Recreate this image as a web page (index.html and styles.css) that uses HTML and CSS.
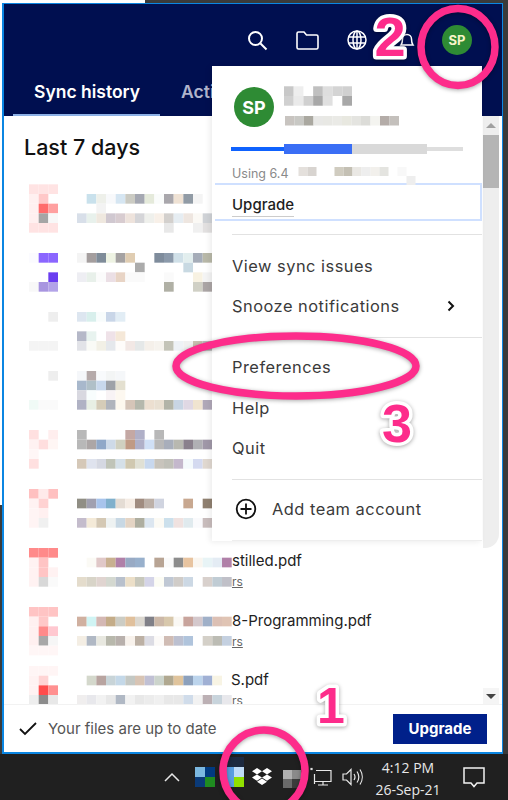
FILE: index.html
```html
<!DOCTYPE html>
<html lang="en">
<head>
    <meta charset="UTF-8">
    <meta name="viewport" content="width=device-width, initial-scale=1.0">
    <title>Dropbox - Preferences</title>
    <link rel="stylesheet" href="styles.css">
</head>
<body>
    <div class="window">
        <header class="top">
            <div class="top-icons">
                <span class="top-btn"><svg width="24" height="24" viewBox="0 0 24 24" fill="none" stroke="#fff" stroke-width="2"><circle cx="10.5" cy="10.5" r="6.5"/><path d="M15.5 15.5l6 6"/></svg></span>
                <span class="top-btn"><svg width="24" height="24" viewBox="0 0 24 24" fill="none" stroke="#fff" stroke-width="1.6"><path d="M2 5.5a1.500 1.500 0 0 1 1.500-1.500h5.500l2.500 3h10a1.500 1.500 0 0 1 1.500 1.500v11a1.500 1.500 0 0 1-1.500 1.500h-18a1.500 1.500 0 0 1-1.500-1.500z"/></svg></span>
                <span class="top-btn"><svg width="22" height="22" viewBox="0 0 22 22" fill="none" stroke="#fff" stroke-width="1.500"><circle cx="11" cy="11" r="9"/><ellipse cx="11" cy="11" rx="4" ry="9"/><path d="M2 8h18M2 14h18M11 2v18"/></svg></span>
                <span class="top-btn"><svg width="22" height="22" viewBox="0 0 22 22" fill="none" stroke="#fff" stroke-width="1.500"><path d="M5 16c1.500-2 1.500-4 1.500-6a4.500 4.500 0 0 1 9 0c0 2 0 4 1.500 6z"/></svg></span>
                <span class="top-btn"><span class="avatar avatar-small">SP</span></span>
            </div>
            <nav class="tabs">
                <span class="tab tab-active">Sync history</span>
                <span class="tab">Activity</span>
            </nav>
        </header>

        <div class="content">
            <main class="panel">
                <h2 class="panel-title">Last 7 days</h2>
                <div class="file-list">
                    <div class="file-row">
                        <svg class="mosaic-icon" viewBox="0 0 3 5"><g transform="translate(0,-1)"><rect x="0" fill="#ffe3e3"/><rect x="1" fill="#ffe3e3"/><rect x="2" fill="#ffe3e3"/></g><rect x="0" fill="#fff0f0"/><rect x="1" fill="#ffc8c8"/><g transform="translate(0,1)"><rect x="0" fill="#fff0f0"/><rect x="1" fill="#ff6b6b"/><rect x="2" fill="#ffa0a0"/></g><g transform="translate(0,2)"><rect x="0" fill="#fff0f0"/><rect x="1" fill="#a5a5a5"/><rect x="2" fill="#f8f8f8"/></g><g transform="translate(0,3)"><rect x="0" fill="#ffe3e3"/><rect x="1" fill="#ffe3e3"/><rect x="2" fill="#ffe3e3"/></g></svg>
                        <svg class="mosaic-text" viewBox="0 0 16 5"><rect x="1" fill="#c9e1ec"/><rect x="2" fill="#eef0ea"/><rect x="3" fill="#f8f9fb"/><rect x="4" fill="#d6e6f2"/><rect x="5" fill="#cbcbc3"/><rect x="6" fill="#a5a8b2"/><rect x="7" fill="#e5eadb"/><rect x="8" fill="#fafcfb"/><rect x="9" fill="#a9a7ac"/><rect x="10" fill="#efe2d4"/><rect x="11" fill="#919ba5"/><rect x="12" fill="#f4f4f4"/><g transform="translate(0,1)"><rect x="2" fill="#f3f3f3"/></g><g transform="translate(0,2)"><rect x="0" fill="#d8dfe9"/><rect x="1" fill="#e8f1ec"/><rect x="2" fill="#efe8df"/><rect x="3" fill="#d0c8d0"/><rect x="4" fill="#d8ccd0"/><rect x="5" fill="#eee3dc"/><rect x="6" fill="#d5d5d8"/><rect x="7" fill="#eff0ec"/><rect x="8" fill="#f8f0e8"/><rect x="9" fill="#d3d0cd"/><rect x="10" fill="#e6edf2"/><rect x="11" fill="#eee6e0"/><rect x="12" fill="#fbf9f5"/><rect x="13" fill="#cfd2d6"/></g><g transform="translate(0,3)"><rect x="9" fill="#e8e8e8"/><rect x="12" fill="#f0f0f0"/><rect x="13" fill="#e2e0e0"/></g></svg>
                    </div>
                    <div class="file-row">
                        <svg class="mosaic-icon" viewBox="0 0 3 5"><rect x="0" fill="#fbfbff"/><rect x="1" fill="#8b66ff"/><rect x="2" fill="#8b66ff"/><g transform="translate(0,2)"><rect x="2" fill="#6a3df0"/></g><g transform="translate(0,3)"><rect x="0" fill="#f8f8f8"/><rect x="1" fill="#a895e0"/><rect x="2" fill="#b3a3e8"/></g></svg>
                        <svg class="mosaic-text" viewBox="0 0 16 5"><rect x="0" fill="#f4f4f4"/><rect x="1" fill="#a49e9e"/><rect x="2" fill="#7f8c99"/><rect x="3" fill="#eef3e3"/><rect x="4" fill="#a5a2a2"/><rect x="5" fill="#e0cdb2"/><rect x="8" fill="#7f8c9c"/><rect x="9" fill="#8c9aab"/><rect x="10" fill="#d0e0e8"/><rect x="11" fill="#e2eeee"/><rect x="12" fill="#a5acb8"/><rect x="13" fill="#b8b8a8"/><g transform="translate(0,1)"><rect x="6" fill="#ababab"/><rect x="11" fill="#c8d9e2"/></g><g transform="translate(0,2)"><rect x="0" fill="#eeeef3"/><rect x="1" fill="#e8f0ea"/><rect x="2" fill="#fbfbfb"/><rect x="3" fill="#ebdfe5"/><rect x="4" fill="#e8d4c5"/><rect x="5" fill="#fafafa"/><rect x="6" fill="#fafafa"/><rect x="9" fill="#fafafa"/><rect x="12" fill="#f8f2e2"/><rect x="13" fill="#f4f4f4"/></g><g transform="translate(0,3)"><rect x="9" fill="#b0b0a5"/><rect x="12" fill="#d0d0c5"/><rect x="13" fill="#aba5a5"/></g></svg>
                    </div>
                    <div class="file-row">
                        <svg class="mosaic-icon" viewBox="0 0 3 5"><rect x="2" fill="#eeeeee"/><g transform="translate(0,3)"><rect x="0" fill="#f4f4f4"/><rect x="1" fill="#f4f4f4"/><rect x="2" fill="#f4f4f4"/></g></svg>
                        <svg class="mosaic-text" viewBox="0 0 16 5"><rect x="0" fill="#dde6f0"/><rect x="1" fill="#d8efec"/><rect x="2" fill="#f8fcfc"/><rect x="3" fill="#c9d6e8"/><rect x="4" fill="#e2edf5"/><g transform="translate(0,2)"><rect x="0" fill="#b5b8c8"/><rect x="1" fill="#e8f3ef"/><rect x="3" fill="#efe2e8"/><rect x="4" fill="#f5e8d8"/></g><g transform="translate(0,3)"><rect x="0" fill="#e2e3e8"/><rect x="1" fill="#f9faf6"/><rect x="2" fill="#f2f0e6"/><rect x="3" fill="#e5e8ec"/><rect x="4" fill="#fefcfa"/><rect x="5" fill="#f2e8e5"/><rect x="6" fill="#e5e8e8"/><rect x="7" fill="#f5f0ea"/><rect x="8" fill="#f6f3ee"/><rect x="9" fill="#c4c4b8"/><rect x="10" fill="#eef2f6"/><rect x="11" fill="#f0f0f0"/><rect x="12" fill="#c8c0b0"/><rect x="13" fill="#c0c0c0"/></g></svg>
                    </div>
                    <div class="file-row">
                        <svg class="mosaic-icon" viewBox="0 0 3 5"><rect x="2" fill="#eeeeee"/><g transform="translate(0,3)"><rect x="0" fill="#f0faf6"/><rect x="1" fill="#fafafa"/><rect x="2" fill="#fafafa"/></g></svg>
                        <svg class="mosaic-text" viewBox="0 0 16 5"><rect x="0" fill="#f5f7fa"/><rect x="1" fill="#b5aaaa"/><rect x="2" fill="#f8fafc"/><rect x="3" fill="#f3f5f5"/><rect x="4" fill="#f5f7f9"/><g transform="translate(0,1)"><rect x="0" fill="#a8b8cc"/><rect x="1" fill="#b0c0c8"/><rect x="2" fill="#c8d8ec"/><rect x="3" fill="#9ea2a8"/><rect x="4" fill="#e4e0d0"/></g><g transform="translate(0,2)"><rect x="0" fill="#d8d8e0"/><rect x="1" fill="#f8fdfd"/><rect x="3" fill="#f8f3f5"/><rect x="4" fill="#fdf8f0"/></g><g transform="translate(0,3)"><rect x="0" fill="#b0b2c4"/><rect x="1" fill="#e8efe4"/><rect x="2" fill="#d5ccb8"/><rect x="3" fill="#b0b4bc"/><rect x="4" fill="#fdf8ee"/><rect x="5" fill="#d5c5b8"/><rect x="6" fill="#b5b8ac"/><rect x="7" fill="#ecdfd0"/><rect x="8" fill="#e9e0d2"/><rect x="9" fill="#b2b4a8"/><rect x="10" fill="#c8d5e4"/><rect x="11" fill="#e0d8e4"/><rect x="12" fill="#f0e4d0"/><rect x="13" fill="#b0a8b8"/></g></svg>
                    </div>
                    <div class="file-row">
                        <svg class="mosaic-icon" viewBox="0 0 3 5"><rect x="0" fill="#ffe0e0"/><rect x="2" fill="#ffeeee"/><g transform="translate(0,1)"><rect x="0" fill="#fff2f2"/><rect x="1" fill="#ffdede"/><rect x="2" fill="#fff6f4"/></g><g transform="translate(0,2)"><rect x="0" fill="#fff6f6"/></g><g transform="translate(0,3)"><rect x="0" fill="#ffe0e0"/></g></svg>
                        <svg class="mosaic-text" viewBox="0 0 16 5"><rect x="0" fill="#b8b8b8"/><rect x="5" fill="#c4a8a4"/><rect x="6" fill="#b0b0c8"/><rect x="8" fill="#b8b8b8"/><g transform="translate(0,1)"><rect x="0" fill="#b8b8b8"/><rect x="1" fill="#aca6a6"/><rect x="2" fill="#90a8c8"/><rect x="3" fill="#cedae8"/><rect x="4" fill="#d0d0c0"/><rect x="5" fill="#c09a84"/><rect x="6" fill="#b0b0c8"/><rect x="7" fill="#d0e0f6"/><rect x="8" fill="#b8b8b8"/><rect x="9" fill="#a8aebb"/><rect x="10" fill="#b8b8b0"/><rect x="11" fill="#8a808c"/><rect x="12" fill="#b0b0b4"/><rect x="13" fill="#a098a8"/></g><g transform="translate(0,3)"><rect x="0" fill="#d5c8b8"/><rect x="1" fill="#dfe3ee"/><rect x="2" fill="#d5d8e2"/><rect x="3" fill="#c0c4b8"/><rect x="4" fill="#d5e0e8"/><rect x="5" fill="#d0c8b0"/><rect x="6" fill="#e0e0d4"/><rect x="7" fill="#c8d8ee"/><rect x="8" fill="#c8c4bc"/><rect x="9" fill="#c0c0b8"/><rect x="10" fill="#c4b8cc"/><rect x="11" fill="#f4fafc"/><rect x="12" fill="#d4daf0"/><rect x="13" fill="#e0d8d0"/></g></svg>
                    </div>
                    <div class="file-row">
                        <svg class="mosaic-icon" viewBox="0 0 3 5"><rect x="0" fill="#ffc0c0"/><rect x="1" fill="#ffeaea"/><rect x="2" fill="#ffc0c0"/><g transform="translate(0,1)"><rect x="0" fill="#fff2f2"/><rect x="1" fill="#ffd2d2"/></g><g transform="translate(0,2)"><rect x="0" fill="#fff4f4"/><rect x="1" fill="#fff0f0"/></g><g transform="translate(0,3)"><rect x="0" fill="#fff4f4"/><rect x="1" fill="#f0f0f0"/></g></svg>
                        <svg class="mosaic-text" viewBox="0 0 16 5"><g transform="translate(0,1)"><rect x="0" fill="#908e84"/><rect x="1" fill="#a0a0b0"/><rect x="2" fill="#a8c4ec"/><rect x="3" fill="#80b0cc"/><rect x="4" fill="#e4dcd4"/><rect x="5" fill="#f5ece4"/><rect x="6" fill="#a08c80"/><rect x="7" fill="#bcb0a8"/><rect x="8" fill="#d0d4e0"/><rect x="11" fill="#c8a890"/><rect x="13" fill="#908070"/></g><g transform="translate(0,3)"><rect x="0" fill="#c4bccc"/><rect x="1" fill="#f4ead8"/><rect x="2" fill="#d4c8b4"/><rect x="3" fill="#eef2f2"/><rect x="4" fill="#c8d8e4"/><rect x="5" fill="#e4d4c4"/><rect x="6" fill="#aeaea0"/><rect x="7" fill="#dce6f0"/><rect x="8" fill="#fcfaf4"/><rect x="9" fill="#cce0ec"/><rect x="10" fill="#f0e2e0"/><rect x="11" fill="#e0eaee"/><rect x="12" fill="#fafafc"/><rect x="13" fill="#c8bcbc"/></g></svg>
                    </div>
                    <div class="file-row">
                        <svg class="mosaic-icon" viewBox="0 0 3 5"><rect x="0" fill="#ff8a8a"/><rect x="1" fill="#ff8a8a"/><rect x="2" fill="#ff8a8a"/><g transform="translate(0,1)"><rect x="0" fill="#fff2f2"/><rect x="1" fill="#ffc4c4"/></g><g transform="translate(0,2)"><rect x="0" fill="#fff2f2"/><rect x="1" fill="#ffc4c4"/><rect x="2" fill="#fff2f2"/></g><g transform="translate(0,3)"><rect x="0" fill="#fff2f2"/><rect x="1" fill="#d8d8d8"/><rect x="2" fill="#fafafa"/></g></svg>
                        <svg class="mosaic-text" viewBox="0 0 16 5"><g transform="translate(0,1)"><rect x="1" fill="#fbfaf5"/><rect x="2" fill="#e0c8c8"/><rect x="3" fill="#c8b090"/><rect x="4" fill="#b080a8"/><rect x="5" fill="#98aac4"/><rect x="6" fill="#98b0cc"/><rect x="8" fill="#b8a494"/><rect x="9" fill="#fafafa"/><rect x="10" fill="#8c8c8c"/><rect x="11" fill="#e8c4a0"/><rect x="12" fill="#faf6f0"/><rect x="13" fill="#e8f4f6"/><rect x="14" fill="#e4ecf4"/><rect x="15" fill="#b080a8"/></g><g transform="translate(0,3)"><rect x="0" fill="#e4dccc"/><rect x="1" fill="#d8d4c8"/><rect x="2" fill="#e0d4d0"/><rect x="3" fill="#d4d8d0"/><rect x="4" fill="#b8c0cc"/><rect x="5" fill="#ecdfc8"/><rect x="6" fill="#c8c8bc"/><rect x="7" fill="#d4d4e8"/><rect x="8" fill="#fcfcf4"/><rect x="9" fill="#c0c8d4"/><rect x="10" fill="#d0ccc8"/><rect x="11" fill="#ccd8e4"/><rect x="13" fill="#d8d0cc"/><rect x="14" fill="#c0ccd4"/><rect x="15" fill="#c0c0c8"/></g></svg>
                        <div class="file-info"><span class="file-name">stilled.pdf</span><span class="file-sub">rs</span></div>
                    </div>
                    <div class="file-row">
                        <svg class="mosaic-icon" viewBox="0 0 3 5"><rect x="0" fill="#ffc4c4"/><rect x="1" fill="#ffc4c4"/><rect x="2" fill="#ffc4c4"/><g transform="translate(0,1)"><rect x="0" fill="#fff0f0"/><rect x="1" fill="#ffc8c8"/></g><g transform="translate(0,2)"><rect x="0" fill="#fff0f0"/><rect x="1" fill="#ff8a8a"/><rect x="2" fill="#ffc8d0"/></g><g transform="translate(0,3)"><rect x="0" fill="#fff0f0"/><rect x="1" fill="#a8a8a8"/><rect x="2" fill="#f6f6f6"/></g><g transform="translate(0,4)"><rect x="0" fill="#fff6f6"/><rect x="1" fill="#fff6f6"/><rect x="2" fill="#fff6f6"/></g></svg>
                        <svg class="mosaic-text" viewBox="0 0 16 5"><g transform="translate(0,1)"><rect x="0" fill="#d0b0a0"/><rect x="1" fill="#d0f4f4"/><rect x="2" fill="#d4b8b4"/><rect x="3" fill="#c4ac88"/><rect x="4" fill="#ccccc4"/><rect x="5" fill="#e0c09c"/><rect x="6" fill="#dcd8d0"/><rect x="7" fill="#808088"/><rect x="8" fill="#ccb8a8"/><rect x="9" fill="#d8c8ac"/><rect x="10" fill="#faf8f4"/><rect x="11" fill="#c8a49c"/><rect x="12" fill="#d4c8cc"/><rect x="13" fill="#a0b0c8"/><rect x="14" fill="#dcc0b4"/><rect x="15" fill="#e0c4b4"/></g><g transform="translate(0,3)"><rect x="0" fill="#f4eee4"/><rect x="1" fill="#b0b8c4"/><rect x="2" fill="#e8e8e0"/><rect x="3" fill="#b8b8ac"/><rect x="4" fill="#b8b0ac"/><rect x="5" fill="#f8f2ec"/><rect x="6" fill="#bcb0a4"/><rect x="7" fill="#dcdce4"/><rect x="8" fill="#fcfaf8"/><rect x="9" fill="#d0bcb4"/><rect x="10" fill="#bcc0d0"/><rect x="11" fill="#b0c4dc"/><rect x="13" fill="#d4d0c8"/><rect x="14" fill="#bcbcb4"/><rect x="15" fill="#c4d0e0"/></g></svg>
                        <div class="file-info file-info-low"><span class="file-name">8-Programming.pdf</span><span class="file-sub">rs</span></div>
                    </div>
                    <div class="file-row">
                        <svg class="mosaic-icon" viewBox="0 0 3 5"><rect x="0" fill="#fff5f5"/><rect x="1" fill="#fff5f5"/><rect x="2" fill="#fff5f5"/><g transform="translate(0,1)"><rect x="0" fill="#fff2f2"/><rect x="1" fill="#ffd4d4"/></g><g transform="translate(0,2)"><rect x="0" fill="#fff2f2"/><rect x="1" fill="#ff4c4c"/><rect x="2" fill="#ff9090"/></g><g transform="translate(0,3)"><rect x="0" fill="#eeeeee"/><rect x="1" fill="#8c8c8c"/><rect x="2" fill="#e8e8e8"/></g></svg>
                        <svg class="mosaic-text" viewBox="0 0 16 5"><g transform="translate(0,1)"><rect x="1" fill="#d4d8cc"/><rect x="2" fill="#b8a4a0"/><rect x="3" fill="#c8d4d8"/><rect x="4" fill="#c4d8e8"/><rect x="5" fill="#c4c8c4"/><rect x="6" fill="#d8c4b4"/><rect x="7" fill="#c0c0d4"/><rect x="8" fill="#ccd4cc"/><rect x="9" fill="#b0a890"/><rect x="10" fill="#e0c49c"/><rect x="11" fill="#8ca0bc"/><rect x="12" fill="#bcd4ec"/><rect x="13" fill="#a0b0d4"/><rect x="14" fill="#f8f4e4"/></g><g transform="translate(0,3)"><rect x="0" fill="#f0eeee"/><rect x="1" fill="#e8e8ec"/><rect x="2" fill="#f2f2f2"/><rect x="3" fill="#e8e8e8"/><rect x="4" fill="#b0b8c4"/><rect x="5" fill="#f2f2f2"/><rect x="6" fill="#e8e8e8"/><rect x="7" fill="#ececec"/><rect x="8" fill="#f0f0f0"/><rect x="9" fill="#e8e8e8"/><rect x="10" fill="#e8e8e8"/><rect x="11" fill="#d0dcea"/><rect x="12" fill="#f2f2f2"/><rect x="13" fill="#bcb0b4"/><rect x="14" fill="#c8d4dc"/><rect x="15" fill="#e8e8ec"/></g></svg>
                        <div class="file-info file-info-low"><span class="file-name file-name-tight">S.pdf</span><span class="file-sub">rs</span></div>
                    </div>
                </div>
            </main>
            <div class="scrollbar">
                <div class="scroll-track">
                    <span class="arrow-up"></span>
                    <span class="scroll-thumb"></span>
                </div>
                <span class="scroll-down"><span class="arrow-down"></span></span>
            </div>
        </div>

        <footer class="status-bar">
            <svg class="check" width="18" height="14" viewBox="0 0 18 14" fill="none" stroke="#111" stroke-width="1.800"><path d="M1 7l5 5L17 1"/></svg>
            <span class="status-text">Your files are up to date</span>
            <span class="upgrade-btn">Upgrade</span>
        </footer>

        <!-- account menu, opened from the avatar -->
        <div class="menu">
            <div class="account">
                <span class="avatar avatar-large">SP</span>
                <div class="account-info">
                    <svg class="mosaic-name" viewBox="0 0 7 2"><rect x="0" fill="#c8c8c8"/><rect x="1" fill="#eeeeee"/><rect x="3" fill="#c0c0c0"/><rect x="4" fill="#dedede"/><rect x="5" fill="#d4d4d4"/><rect x="6" fill="#d0d0d0"/><g transform="translate(0,1)"><rect x="0" fill="#d0d0d0"/><rect x="1" fill="#eaeaea"/><rect x="2" fill="#d0d0d0"/><rect x="3" fill="#a8a8a8"/><rect x="4" fill="#e0e0e0"/><rect x="6" fill="#a8a8a8"/></g></svg>
                    <svg class="mosaic-mail" viewBox="0 0 12 1"><rect x="0" fill="#c8c4c0"/><rect x="1" fill="#c8c8c4"/><rect x="2" fill="#aaa8a0"/><rect x="3" fill="#e8e8e6"/><rect x="4" fill="#e8e8e4"/><rect x="5" fill="#eaeae6"/><rect x="6" fill="#e8e8e0"/><rect x="7" fill="#e4e4e0"/><rect x="8" fill="#dcdcd8"/><rect x="9" fill="#f4f4f0"/><rect x="10" fill="#b4aca8"/><rect x="11" fill="#c4c0bc"/></svg>
                </div>
            </div>
            <div class="usage-bar"><span class="usage-a"></span><span class="usage-b"></span><span class="usage-c"></span><span class="usage-d"></span></div>
            <div class="usage-line">
                <span class="usage-text">Using 6.4</span>
                <svg class="mosaic-usage" viewBox="0 0 13 2"><rect x="0" fill="#e4e0dc"/><rect x="1" fill="#d8d4d0"/><rect x="4" fill="#d0ccc0"/><rect x="5" fill="#c4c0b4"/><rect x="6" fill="#eae8e4"/><rect x="7" fill="#eeeeee"/><rect x="8" fill="#f2f0ec"/><rect x="9" fill="#e4e4e0"/><rect x="11" fill="#f8f8f8"/><g transform="translate(0,1)"><rect x="12" fill="#eeeeee"/></g></svg>
            </div>
            <div class="menu-upgrade"><span>Upgrade</span></div>
            <div class="menu-group">
                <div class="menu-item">View sync issues</div>
                <div class="menu-item menu-item-sub">Snooze notifications
                    <svg width="8" height="12" viewBox="0 0 8 12" fill="none" stroke="#111" stroke-width="2"><path d="M1.500 1.500L6 6l-4.500 4.500"/></svg>
                </div>
            </div>
            <div class="menu-group menu-group-main">
                <div class="menu-item">Preferences</div>
                <div class="menu-item">Help</div>
                <div class="menu-item">Quit</div>
            </div>
            <div class="menu-group menu-group-last">
                <div class="menu-item menu-item-add">
                    <svg width="22" height="22" viewBox="0 0 22 22" fill="none" stroke="#111" stroke-width="1.800"><circle cx="11" cy="11" r="9.300"/><path d="M11 5.500v11M5.500 11h11"/></svg>
                    Add team account
                </div>
            </div>
        </div>
    </div>

    <footer class="taskbar">
        <svg class="tray-chevron" width="16" height="10" viewBox="0 0 16 10" fill="none" stroke="#e8e8e8" stroke-width="1.500"><path d="M1 9l7-7 7 7"/></svg>
        <svg class="tray-tile" width="20" height="20" viewBox="0 0 2 2"><rect fill="#7bb8e0"/><rect x="1" fill="#003a80"/><rect y="1" fill="#0a3a78"/><rect x="1" y="1" fill="#1f8c20"/></svg>
        <svg class="tray-tile tray-tile-tall" width="20" height="30" viewBox="0 0 2 3"><rect fill="#1d2a40"/><rect x="1" fill="#1d2a40"/><rect y="1" fill="#5a9ee0"/><rect x="1" y="1" fill="#c0dcf8"/><rect y="2" fill="#5a9ee0"/><rect x="1" y="2" fill="#90e000"/></svg>
        <svg class="tray-dropbox" width="20" height="18" viewBox="0 0 20 18" fill="#fff"><path d="M5 0l5 3.200-5 3.200-5-3.200zM15 0l5 3.200-5 3.200-5-3.200zM0 9.600l5-3.200 5 3.200-5 3.200zM15 6.400l5 3.200-5 3.200-5-3.200zM5 13.800l5-3.200 5 3.200-5 3.200z"/></svg>
        <svg class="tray-tile tray-tile-gray" width="18" height="18" viewBox="0 0 2 2"><rect fill="#b0b0b0"/><rect x="1" fill="#8a8a8a"/><rect y="1" fill="#6a6a6a"/><rect x="1" y="1" fill="#3c3c3c"/></svg>
        <svg class="tray-network" width="22" height="20" viewBox="0 0 22 20" fill="none" stroke="#e8e8e8" stroke-width="1.200"><path d="M6 3.500h15v11H5M13 14.500v3M8 18h10M4.500 7v10"/><rect x="1" y="1.500" width="6" height="5"/></svg>
        <svg class="tray-volume" width="21" height="20" viewBox="0 0 21 20" fill="none" stroke="#e8e8e8" stroke-width="1.200"><path d="M1 7h3.500L9 2.500v15L4.500 13H1zM12 7c1.200 1.800 1.200 4.200 0 6M15 4.500c2.200 3.300 2.200 7.700 0 11M18 2.500c3 4.500 3 10.500 0 15"/></svg>
        <div class="clock"><span>4:12 PM</span><span>26-Sep-21</span></div>
        <svg class="tray-notify" width="22" height="21" viewBox="0 0 22 21" fill="none" stroke="#f2f2f2" stroke-width="1.500"><path d="M1 1h20v15h-7l-3 3.500L8 16H1z"/></svg>
    </footer>

    <!-- hand drawn callouts on top of the screenshot -->
    <svg class="callouts" width="508" height="800" viewBox="0 0 508 800">
        <ellipse class="callout-ring" cx="458" cy="47" rx="37" ry="38.500"/>
        <ellipse class="callout-ring" cx="296" cy="366" rx="120" ry="30"/>
        <circle class="callout-ring" cx="264" cy="771" r="41"/>
        <text class="callout-num" x="390" y="56" font-size="56">2</text>
        <text class="callout-num" x="397" y="442" font-size="54">3</text>
        <text class="callout-num" x="331" y="723" font-size="50">1</text>
    </svg>
</body>
</html>
```

FILE: styles.css
```css
* {
    box-sizing: border-box;
}
html, body {
    margin: 0;
    padding: 0;
}
body {
    position: relative;
    width: 508px;
    height: 800px;
    overflow: hidden;
    padding: 3px 5px 0 2px;
    font-family: Inter, "Noto Sans", sans-serif;
    background:
        linear-gradient(#fff, #fff) 0 0 / 145px 3px no-repeat,
        linear-gradient(#fff, #fff) 0 0 / 2px 505px no-repeat,
        #3a3a3a;
}
svg rect {
    width: 1px;
    height: 1px;
}

/* window */
.window {
    position: relative;
    display: flex;
    flex-direction: column;
    width: 501px;
    height: 751px;
    background: #fff;
    border: 1px solid #0b86e2;
    border-left-width: 2px;
    border-bottom-width: 2px;
}
.top {
    flex: none;
    height: 112px;
    background: #000f50;
}
.top-icons {
    display: flex;
    justify-content: flex-end;
    padding: 18px 20px 0 0;
}
.top-btn {
    display: flex;
    align-items: center;
    justify-content: center;
    width: 50px;
    height: 36px;
}
.avatar {
    display: flex;
    align-items: center;
    justify-content: center;
    border-radius: 50%;
    background: #2e8b34;
    color: #fff;
    font-weight: 700;
}
.avatar-small {
    width: 30px;
    height: 30px;
    font-size: 13px;
    color: #f7f4c8;
}
.avatar-large {
    width: 40px;
    height: 40px;
    font-size: 18px;
}
.tabs {
    display: flex;
    margin-top: 12px;
    padding-left: 9px;
}
.tab {
    height: 46px;
    padding: 0 20px 0 21px;
    line-height: 44px;
    font-size: 17.500px;
    font-weight: 600;
    color: #b0b4cc;
}
.tab-active {
    color: #fff;
    border-bottom: 2px solid #8db1e6;
}

/* list */
.content {
    flex: 1;
    display: flex;
    min-height: 0;
}
.panel {
    flex: 1;
    min-width: 0;
    overflow: hidden;
    padding-left: 25px;
}
.panel-title {
    margin: 19px 0 0 -5px;
    height: 59px;
    font-size: 21.500px;
    line-height: 25px;
    font-weight: 500;
    color: #111;
}
.file-row {
    display: flex;
    height: 59px;
}
.file-row svg {
    overflow: visible;
    flex: none;
    filter: blur(0.4px);
}
.mosaic-icon {
    width: 29px;
    height: 48.350px;
    margin-right: 19.300px;
}
.mosaic-text {
    width: 154.700px;
    height: 48.350px;
}
.file-info {
    display: flex;
    flex-direction: column;
    padding-top: 3px;
}
.file-info-low {
    padding-top: 4px;
}
.file-name {
    font-size: 15px;
    line-height: 20px;
    color: #222;
    white-space: nowrap;
}
.file-name-tight {
    margin-left: -1px;
}
.file-sub {
    margin-top: 3px;
    font-size: 12px;
    line-height: 16px;
    color: #666;
    text-decoration: underline;
}

/* scrollbar */
.scrollbar {
    flex: none;
    display: flex;
    flex-direction: column;
    justify-content: space-between;
    width: 19px;
    padding-right: 3px;
}
.scroll-track {
    height: 432px;
    padding-top: 7px;
    background: #eeeeee;
    border-bottom-right-radius: 14px;
}
.arrow-up,
.arrow-down {
    display: block;
    width: 0;
    margin: 0 auto;
    border-left: 5px solid transparent;
    border-right: 5px solid transparent;
}
.arrow-up {
    border-bottom: 5px solid #a0a0a0;
}
.arrow-down {
    border-top: 5px solid #444;
}
.scroll-down {
    display: flex;
    align-items: center;
    height: 16px;
    background: #f5f5f5;
}
.scroll-thumb {
    display: block;
    height: 53px;
    margin-top: 7px;
    background: #b5b5b5;
}

/* footer */
.status-bar {
    flex: none;
    display: flex;
    align-items: center;
    height: 48px;
    padding: 0 15px;
    background: #fff;
    border-top: 1px solid #f2f2f2;
}
.check {
    margin-right: 11px;
}
.status-text {
    flex: 1;
    font-size: 15px;
    color: #555;
}
.upgrade-btn {
    width: 94px;
    height: 30px;
    line-height: 30px;
    text-align: center;
    background: #00208a;
    color: #fff;
    font-size: 15px;
    font-weight: 700;
}

/* account menu */
.menu {
    position: absolute;
    top: 62px;
    left: 208px;
    width: 270px;
    height: 475px;
    padding-top: 21px;
    background: #fff;
    box-shadow: -2px 1px 6px rgba(0, 0, 0, 0.08);
}
.account {
    display: flex;
    gap: 10px;
    padding-left: 22px;
}
.account-info {
    display: flex;
    flex-direction: column;
}
.mosaic-name {
    width: 68px;
    height: 20px;
    margin-top: -1px;
    filter: blur(0.4px);
}
.mosaic-mail {
    width: 116px;
    height: 9.500px;
    margin-top: 10px;
    filter: blur(0.4px);
}
.usage-bar {
    display: flex;
    align-items: center;
    height: 10px;
    margin: 17px 19px 0;
}
.usage-a {
    width: 53px;
    height: 4px;
    background: #0f62fe;
}
.usage-b {
    width: 68px;
    height: 10px;
    background: #3a6ef5;
}
.usage-c {
    width: 75px;
    height: 10px;
    background: #d9d9d9;
}
.usage-d {
    flex: 1;
    height: 4px;
    background: #dedede;
}
.usage-line {
    display: flex;
    align-items: center;
    height: 20px;
    margin: 9px 0 0 20px;
}
.usage-text {
    width: 61px;
    overflow: hidden;
    white-space: nowrap;
    font-size: 12.500px;
    color: #8a8a8a;
}
.mosaic-usage {
    width: 128px;
    height: 18px;
    margin-top: 6px;
    filter: blur(0.4px);
}
.menu-upgrade {
    height: 38px;
    margin: 0 0 0 3px;
    padding: 9px 0 0 17px;
    border: 2px solid #cfe0ff;
    border-left: 0;
}
.menu-upgrade span {
    display: inline-block;
    height: 22px;
    font-size: 15px;
    font-weight: 500;
    line-height: 20px;
    color: #1e1e1e;
    border-bottom: 1px solid #cccccc;
}
.menu-group {
    margin-left: 20px;
    padding: 11px 0;
    border-top: 1px solid #e2e2e2;
}
.menu-upgrade + .menu-group {
    margin-top: 13px;
}
.menu-group-main {
    padding: 9px 0 10px;
}
.menu-group-main .menu-item {
    height: 40.500px;
}
.menu-group-last {
    padding: 9px 0 11px;
    border-bottom: 1px solid #eeeeee;
}
.menu-item {
    height: 40px;
    line-height: 40px;
    font-size: 16.400px;
    color: #3a3a3a;
    letter-spacing: 0.5px;
}
.menu-item-sub {
    display: flex;
    align-items: center;
    justify-content: space-between;
    padding-right: 27px;
}
.menu-item-add {
    display: flex;
    align-items: center;
    gap: 15px;
    padding-left: 3px;
}

/* windows taskbar */
.taskbar {
    position: absolute;
    left: 0;
    bottom: 0;
    display: flex;
    align-items: center;
    width: 508px;
    height: 46px;
    padding-left: 164px;
    background: #202020;
}
.tray-chevron {
    margin-right: 15px;
}
.tray-tile {
    margin-right: 9px;
}
.tray-tile-tall {
    margin-top: -10px;
    margin-right: 8px;
}
.tray-dropbox {
    margin-right: 11px;
}
.tray-tile-gray {
    margin: 4px 9px 0 0;
}
.tray-network {
    margin-right: 10px;
}
.clock {
    display: flex;
    flex-direction: column;
    align-items: center;
    width: 72px;
    margin-left: 9px;
    padding-top: 3px;
    font-family: "Open Sans", sans-serif;
    font-size: 14px;
    line-height: 22px;
    color: #e8e8e8;
}
.tray-notify {
    margin-left: 19px;
}

/* callouts */
.callouts {
    position: absolute;
    top: 0;
    left: 0;
    filter: drop-shadow(0 1px 2px rgba(0, 0, 0, 0.35));
}
.callout-ring {
    fill: none;
    stroke: #fd2c8b;
    stroke-width: 7.500;
}
.callout-num {
    font-family: "Liberation Sans", sans-serif;
    font-weight: 700;
    text-anchor: middle;
    fill: #fd2c8b;
    stroke: #fff;
    stroke-width: 7px;
    stroke-linejoin: round;
    paint-order: stroke;
}
```
